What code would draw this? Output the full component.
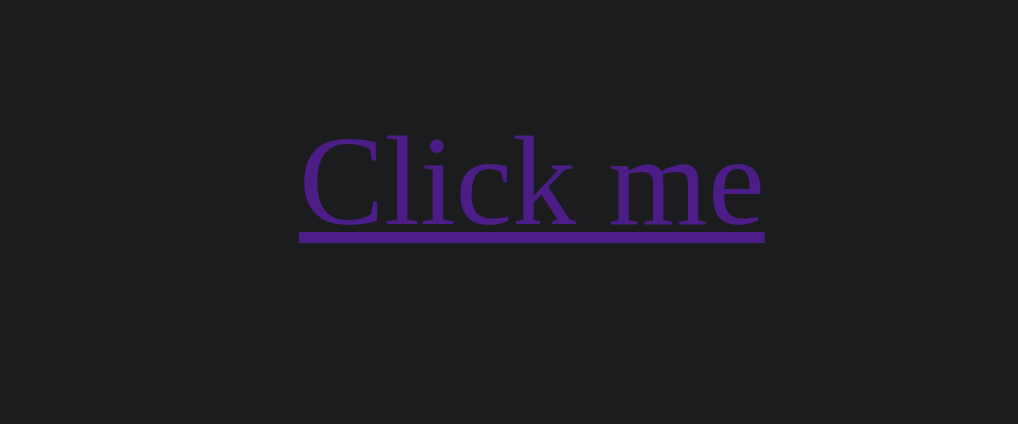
export default function App() {
  return (
    <div className="h-[424px] w-full bg-[#1b1c1e] pt-[117px]">
      <a
        href="#"
        className="ml-[299px] inline-block font-['Liberation_Serif',serif] text-[128px] leading-none text-[#4c1d87] underline decoration-[11px] underline-offset-[8px]"
      >
        Click me
      </a>
    </div>
  )
}
